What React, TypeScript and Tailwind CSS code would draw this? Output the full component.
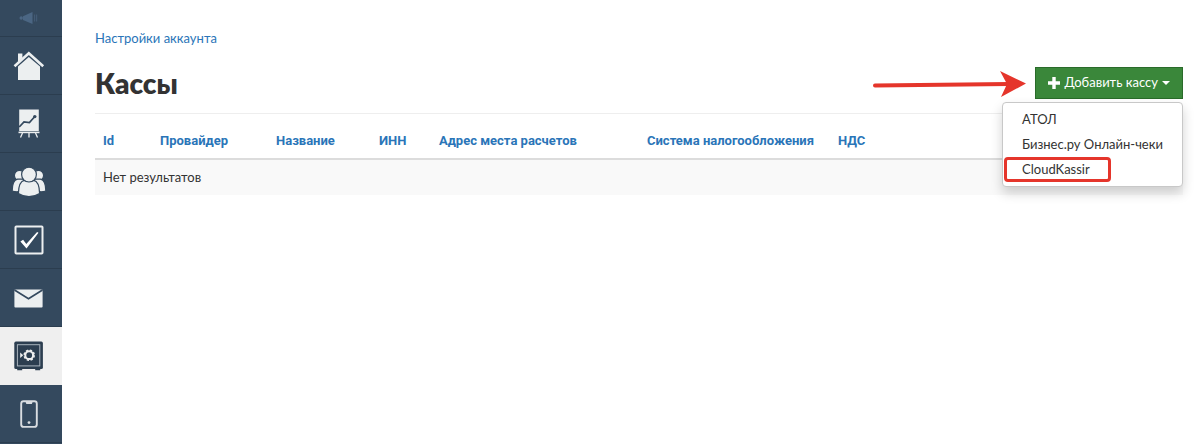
import type { ReactNode } from "react";

type NavItem = {
  id: string;
  label: string;
  icon: ReactNode;
  active?: boolean;
};

const iconProps = {
  width: 34,
  height: 34,
  viewBox: "0 0 34 34",
  "aria-hidden": true,
};

const navItems: NavItem[] = [
  {
    id: "home",
    label: "Главная",
    icon: (
      <svg {...iconProps} fill="#eceff0">
        <path d="M6 4.500h4.400V9L6 13z" />
        <path d="M2.500 17.200 16.800 4.200l14.400 13" fill="none" stroke="#eceff0" strokeWidth="2.600" />
        <path d="M6 17.600 16.800 7.900 28 17.600V31H6z" />
      </svg>
    ),
  },
  {
    id: "stats",
    label: "Статистика",
    icon: (
      <svg {...iconProps}>
        <path d="M7.200 2.500h19.600V24H7.200z" fill="#eceff0" />
        <path d="M6.500 25.400h21" stroke="#eceff0" strokeWidth="1.600" />
        <path d="M10.500 26 8.500 30.500M17 26v4.500M23.500 26l2 4.500" fill="none" stroke="#eceff0" strokeWidth="1.300" />
        <path d="m7.200 20 4.800-5 5.400.6 5.200-5.800" fill="none" stroke="#34495e" strokeWidth="1.700" />
        <circle cx="22.800" cy="9.600" r="1.700" fill="#34495e" />
      </svg>
    ),
  },
  {
    id: "people",
    label: "Пользователи",
    icon: (
      <svg {...iconProps} fill="#eceff0" stroke="#34495e" strokeWidth="1.200">
        <circle cx="7.500" cy="10.500" r="5.100" />
        <circle cx="26.500" cy="10.500" r="5.100" />
        <path d="M.2 26C.2 19 2 15 5.500 14.200h6V25c-4 2.200-8 2.200-11.300 1z" />
        <path d="M33.800 26c0-7-1.800-11-5.300-11.800h-6V25c4 2.200 8 2.200 11.300 1z" />
        <path d="M6.400 28.600c.2-8 2.400-12.600 6-13.200 3 1.400 6.200 1.400 9.200 0 3.600.6 5.800 5.200 6 13.200-6 4-15.200 4-21.200 0z" />
        <circle cx="17" cy="9.600" r="7.400" />
      </svg>
    ),
  },
  {
    id: "tasks",
    label: "Задачи",
    icon: (
      <svg {...iconProps}>
        <rect x="3.500" y="3.500" width="27" height="27" rx=".8" fill="none" stroke="#eceff0" strokeWidth="2" />
        <path d="m8.400 18.600 2.700-1.800 3.200 4.200 10.800-12 1.400.8-12 15.700z" fill="#fff" />
      </svg>
    ),
  },
  {
    id: "mail",
    label: "Рассылки",
    icon: (
      <svg {...iconProps}>
        <rect x="2.400" y="8.400" width="28.200" height="18.200" rx="1" fill="#eceff0" />
        <path d="m2.500 9 14 8.800 14-8.800" fill="none" stroke="#34495e" strokeWidth="1.700" />
      </svg>
    ),
  },
  {
    id: "cash",
    label: "Кассы",
    active: true,
    icon: (
      <svg {...iconProps}>
        <path d="M5.200 29h5v2.200h-5zM23.200 29h5v2.200h-5z" fill="#2c3e50" />
        <rect x="2.300" y="2.600" width="28.600" height="27.400" rx="1.600" fill="#2c3e50" />
        <rect x="5.400" y="5.700" width="22.400" height="21.200" fill="none" stroke="#a9b3bc" strokeWidth="1" />
        <circle cx="17.200" cy="16.200" r="3.900" fill="none" stroke="#efefef" strokeWidth="2" />
        <circle cx="17.200" cy="16.200" r="5" fill="none" stroke="#efefef" strokeWidth="1.600" strokeDasharray="2.300 1.630" />
        <path d="m8.200 13.400 3 2.800-3 2.800z" fill="#efefef" />
      </svg>
    ),
  },
  {
    id: "mobile",
    label: "Приложение",
    icon: (
      <svg {...iconProps}>
        <rect x="9.200" y="4.300" width="15.600" height="25.600" rx="2.400" fill="none" stroke="#d9dde1" strokeWidth="1.900" />
        <path d="M13.500 4.500h7.200l-.8 2.500h-5.600z" fill="#d9dde1" />
        <circle cx="17" cy="25.600" r="1.400" fill="#d9dde1" />
      </svg>
    ),
  },
];

const columns = [
  { title: "Id", width: "w-[57px]" },
  { title: "Провайдер", width: "w-[116px]" },
  { title: "Название", width: "w-[103px]" },
  { title: "ИНН", width: "w-[60px]" },
  { title: "Адрес места расчетов", width: "w-[208px]" },
  { title: "Система налогообложения", width: "w-[191px]" },
  { title: "НДС", width: "" },
];

const providers = [
  { name: "АТОЛ" },
  { name: "Бизнес.ру Онлайн-чеки" },
  { name: "CloudKassir", marked: true },
];

function Sidebar() {
  return (
    <nav className="flex w-[62px] shrink-0 flex-col bg-[#34495e]">
      <a
        href="#news"
        aria-label="Новости"
        className="flex h-[37px] items-center justify-center border-b border-[#2b3d4f] pr-1"
      >
        <svg width="20" height="14" viewBox="0 0 20 14" aria-hidden="true">
          <circle cx="2.200" cy="7" r="1.700" fill="#4b6683" />
          <path d="M4 5.200 13.500 1v12L4 9z" fill="#4b6683" />
          <path d="M15.600 3.500v7M17.600 3.500v7" stroke="#425a74" strokeWidth="1.200" />
        </svg>
      </a>
      {navItems.map((item) => (
        <a
          key={item.id}
          href={`#${item.id}`}
          aria-label={item.label}
          className={`flex h-[58px] items-center justify-center border-b pr-1 ${
            item.active ? "border-[#efefef] bg-[#efefef]" : "border-[#2b3d4f]"
          }`}
        >
          {item.icon}
        </a>
      ))}
    </nav>
  );
}

function Arrow() {
  return (
    <svg width="154" height="30" viewBox="0 0 154 30" aria-hidden="true">
      <path d="M2 17.500 136 16" stroke="#e5352b" strokeWidth="4" strokeLinecap="round" />
      <path d="M127 3 153 15.500 128 29l6-13z" fill="#e5352b" />
    </svg>
  );
}

function AddCashMenu() {
  return (
    <div className="relative">
      <button
        type="button"
        aria-expanded="true"
        className="flex h-8 items-center border border-[#2a6b2a] bg-[#3a873a] px-3 text-[13px] text-white"
      >
        <svg width="12" height="12" viewBox="0 0 12 12" aria-hidden="true" className="mr-1">
          <path d="M6 0v12M0 6h12" stroke="#fff" strokeWidth="3.400" />
        </svg>
        Добавить кассу
        <svg width="8" height="4" viewBox="0 0 8 4" aria-hidden="true" className="ml-1">
          <path d="M0 0h8L4 4z" fill="#fff" />
        </svg>
      </button>
      <ul className="absolute top-full right-0 z-10 mt-[3px] rounded border border-[#c8c8c8] bg-white py-1 shadow-[0_6px_12px_rgba(0,0,0,0.18)]">
        {providers.map((provider) => (
          <li key={provider.name} className="relative">
            <a href="#add" className="block px-[19px] text-[13px] leading-[25px] whitespace-nowrap text-[#333]">
              {provider.name}
            </a>
            {provider.marked && (
              <span className="absolute inset-y-0 left-px w-[107px] rounded border-3 border-[#e5352b]" />
            )}
          </li>
        ))}
      </ul>
    </div>
  );
}

function CashTable() {
  return (
    <table className="mt-[9px] w-full table-fixed border-collapse text-left text-[13px] leading-[19px]">
      <thead>
        <tr className="border-b-2 border-[#dcdcdc]">
          {columns.map((column) => (
            <th
              key={column.title}
              className={`px-2 py-2 font-['Roboto',sans-serif] font-bold whitespace-nowrap ${column.width}`}
            >
              <a href="#sort" className="text-[#2a75b8]">
                {column.title}
              </a>
            </th>
          ))}
        </tr>
      </thead>
      <tbody>
        <tr className="bg-[#f9f9f9]">
          <td colSpan={columns.length} className="p-2 text-[#333]">
            Нет результатов
          </td>
        </tr>
      </tbody>
    </table>
  );
}

export default function App() {
  return (
    <div className="flex min-h-screen bg-white font-['Lato','Open_Sans',sans-serif]">
      <Sidebar />
      <main className="min-w-0 grow pt-7 pr-4 pl-[33px]">
        <a href="#settings" className="block text-[13px] leading-5 text-[#2a75b8]">
          Настройки аккаунта
        </a>
        <header className="flex items-center justify-between border-b border-[#eee] pt-[17px] pb-3">
          <h1 className="text-[28px] leading-9 font-extrabold text-[#333]">Кассы</h1>
          <div className="flex items-center gap-2">
            <Arrow />
            <AddCashMenu />
          </div>
        </header>
        <CashTable />
      </main>
    </div>
  );
}
